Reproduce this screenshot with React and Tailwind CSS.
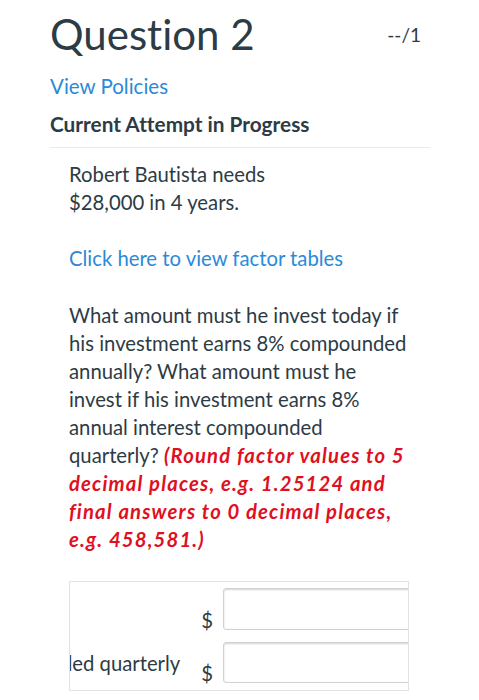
export default function App() {
  return (
    <div className="min-h-[700px] bg-white text-[#2d3b45] [font-variant-ligatures:none]" style={{ fontFamily: 'Lato, "Noto Sans", sans-serif' }}>
      <div className="pl-[50px] pr-[49px] pt-[8px]">
        <div className="flex items-start justify-between">
          <h1 className="text-[42px] leading-[52px] font-normal">Question 2</h1>
          <span className="text-[19px] mt-[13px] mr-[9px]">--/1</span>
        </div>
        <a className="block text-[20.5px] text-[#2b8ad8] mt-[12px] leading-[28px]">View Policies</a>
        <div className="text-[20.8px] font-bold mt-[10px] leading-[28px]">Current Attempt in Progress</div>
        <div className="border-b border-[#e8eaec] mt-[9px]" />
      </div>

      <div className="pl-[69px] pr-[70px] pt-[12px] text-[20.3px] leading-[28px]">
        <p className="w-[220px]">Robert Bautista needs $28,000 in 4 years.</p>
        <p className="mt-[28px]">
          <a className="text-[#2b8ad8]">Click here to view factor tables</a>
        </p>
        <p className="mt-[29px] w-[340px]">
          What amount must he invest today if his investment earns 8% compounded annually? What amount must he invest if his investment earns 8% annual interest compounded quarterly?{' '}
          <span className="text-[#e0101f] font-bold italic tracking-[1.15px] [font-variant-ligatures:common-ligatures]">
            (Round factor values to 5 decimal places, e.g. 1.25124 and final answers to 0 decimal places, e.g. 458,581.)
          </span>
        </p>

        <div className="mt-[28px] w-[340px] h-[110px] border border-[#e3e3e3] overflow-hidden flex flex-col pt-[6px] gap-[12px]">
          <div className="flex items-end justify-end">
            <span className="ml-[14px] mr-[10px] shrink-0 leading-[24px] -mb-[2px]">$</span>
            <div className="w-[200px] h-[42px] shrink-0 rounded-[3px] border border-[#cfd3d6] shadow-[inset_0_1px_2px_rgba(0,0,0,0.18)] -mr-[15px]" />
          </div>
          <div className="flex items-end justify-end">
            <span className="whitespace-nowrap shrink-0 mb-[6px]">Amount to invest if compounded quarterly</span>
            <span className="ml-[21px] mr-[10px] shrink-0 leading-[24px] -mb-[2px]">$</span>
            <div className="w-[200px] h-[41px] shrink-0 rounded-[3px] border border-[#cfd3d6] shadow-[inset_0_1px_2px_rgba(0,0,0,0.18)] -mr-[15px]" />
          </div>
        </div>
      </div>
    </div>
  );
}
